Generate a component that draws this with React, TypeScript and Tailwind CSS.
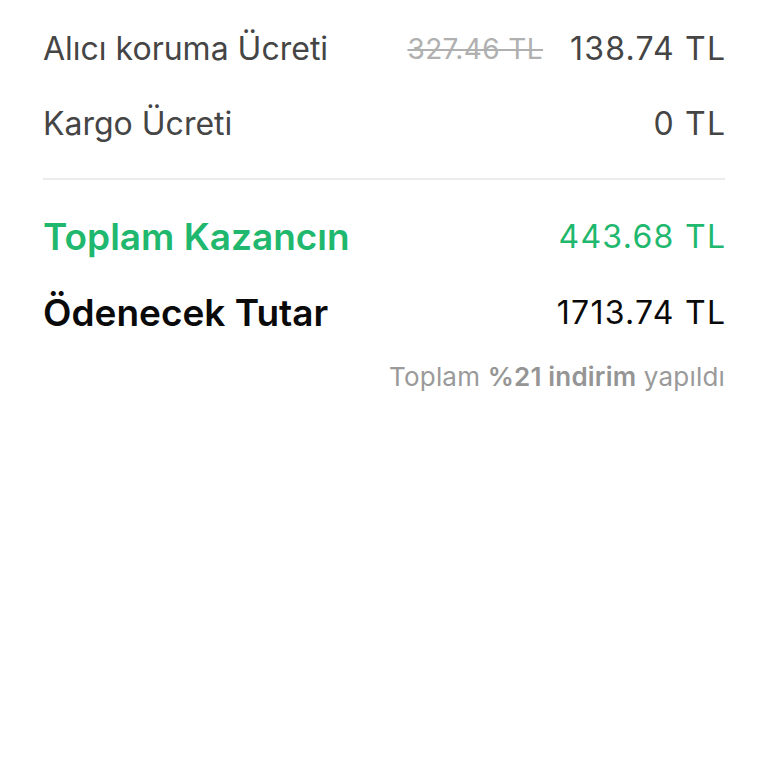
export default function App() {
  return (
    <div
      className="min-h-screen bg-white px-[43px] pt-[26px]"
      style={{ fontFamily: "Inter, 'Noto Sans', sans-serif" }}
    >
      <div className="flex items-center justify-between h-[46px] text-[32px] text-[#454545]">
        <span>Alıcı koruma Ücreti</span>
        <div className="flex items-center gap-[27px]">
          <span className="text-[28px] tracking-[0.4px] text-[#b0b0b0] line-through decoration-[2px]">
            327.46 TL
          </span>
          <span className="tracking-[1.2px] -mr-[1.2px]">138.74 TL</span>
        </div>
      </div>
      <div className="mt-[29px] flex items-center justify-between h-[46px] text-[32px] text-[#454545]">
        <span>Kargo Ücreti</span>
        <span className="tracking-[1.2px] -mr-[1.2px]">0 TL</span>
      </div>
      <div className="mt-[31px] h-[2px] bg-[#ececec]" />
      <div className="mt-[34px] flex items-center justify-between h-[46px]">
        <span className="text-[37px] font-semibold text-[#1fb86e]">Toplam Kazancın</span>
        <span className="text-[32px] tracking-[1.3px] -mr-[1.3px] text-[#1fb86e]">443.68 TL</span>
      </div>
      <div className="mt-[30px] flex items-center justify-between h-[46px]">
        <span className="text-[37px] font-semibold text-[#0a0a0a]">Ödenecek Tutar</span>
        <span className="text-[32px] tracking-[1.3px] -mr-[1.3px] text-[#0a0a0a]">1713.74 TL</span>
      </div>
      <div className="mt-[25px] text-right text-[26px] leading-[32px] tracking-[0.2px] text-[#9a9a9a]">
        Toplam <span className="font-semibold text-[#959595]">%21 indirim</span> yapıldı
      </div>
    </div>
  );
}
